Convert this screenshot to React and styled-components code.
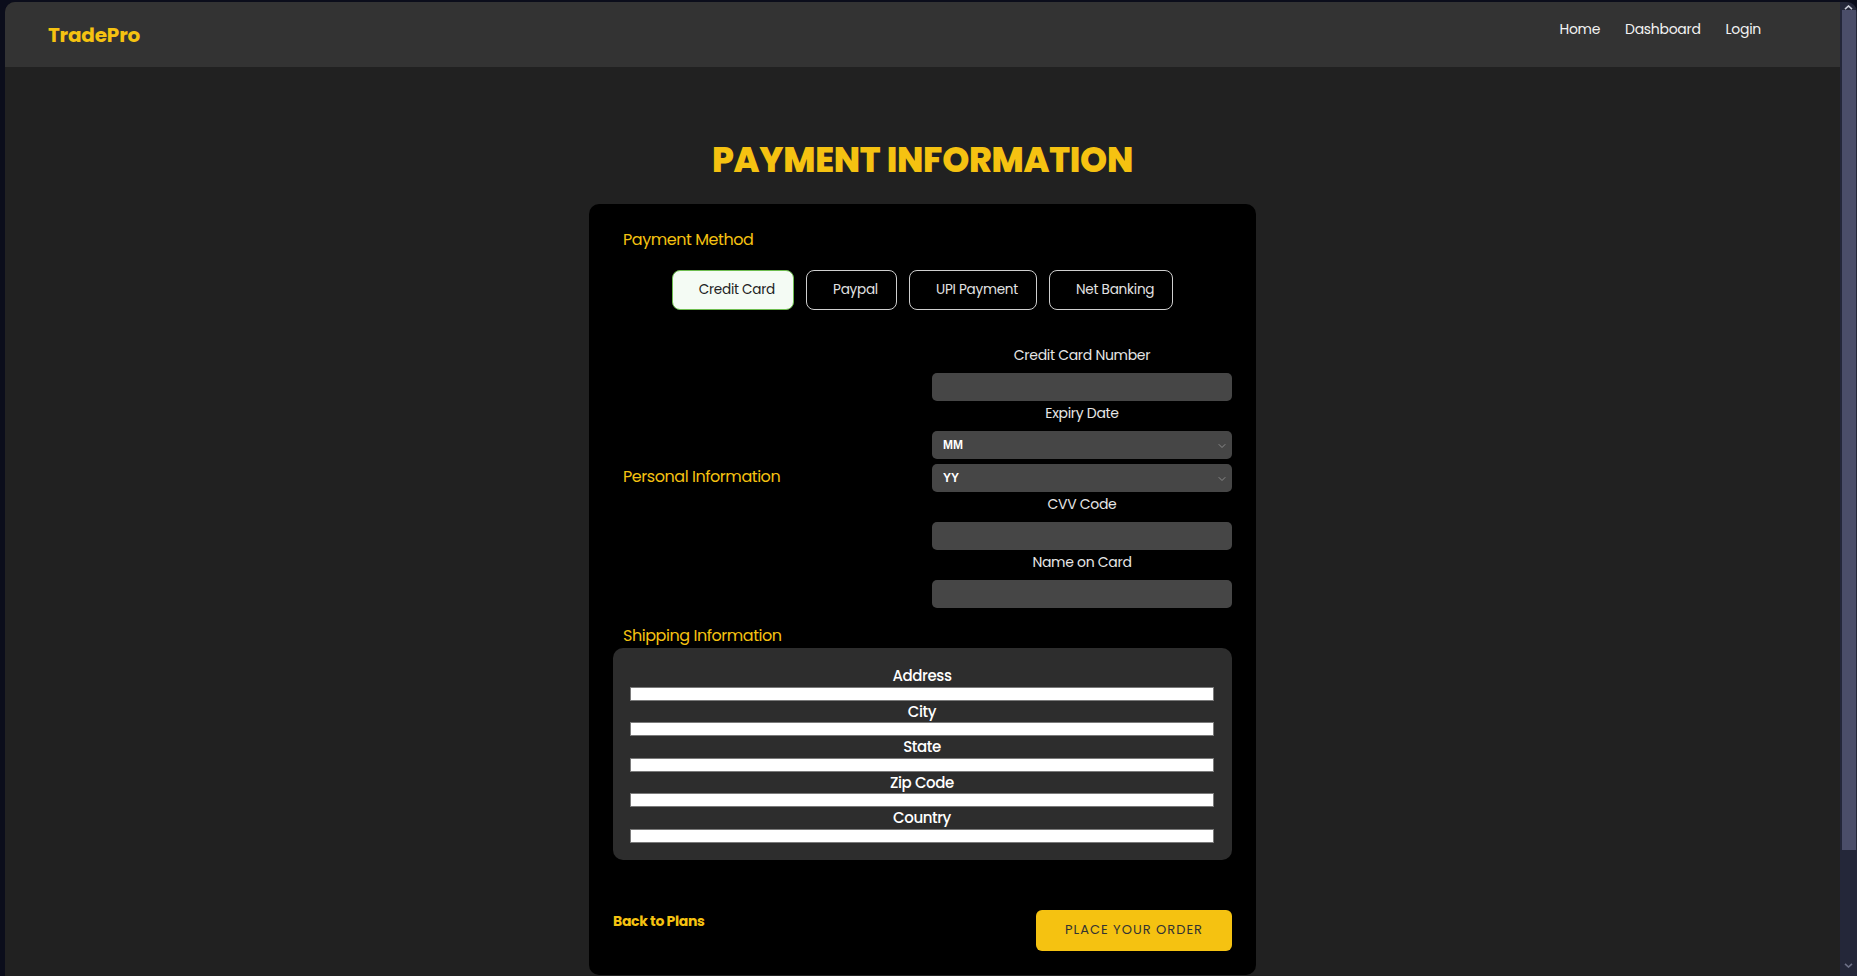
import React from "react";
import styled, { createGlobalStyle } from "styled-components";
import { ChevronDown } from "lucide-react";

const YELLOW = "#f5c211";

const Global = createGlobalStyle`
  html, body {
    margin: 0;
    padding: 0;
    height: 100%;
    overflow: hidden;
    background: #0b0d1b;
  }
  * { box-sizing: border-box; }
  #root { height: 100%; }
`;

const Frame = styled.div`
  display: flex;
  height: calc(100vh - 2px);
  margin: 2px 0 0 5px;
  border-radius: 10px 10px 0 0;
  overflow: hidden;
  font-family: Poppins, Inter, "Noto Sans", sans-serif;
`;

const Page = styled.div`
  flex: 1;
  background: #212121;
  overflow: hidden;
  display: flex;
  flex-direction: column;
`;

const Header = styled.header`
  flex: none;
  height: 65px;
  background: #333333;
  display: flex;
  justify-content: space-between;
  align-items: center;
  padding: 0 79px 0 43px;
`;

const Logo = styled.div`
  color: ${YELLOW};
  font-size: 20px;
  line-height: 24px;
  font-weight: 700;
  letter-spacing: -0.2px;
`;

const Nav = styled.nav`
  align-self: flex-start;
  margin-top: 17px;
  display: flex;
  gap: 25px;
`;

const NavLink = styled.a`
  color: #f2f2f2;
  font-size: 14px;
  line-height: 20px;
  font-weight: 400;
  letter-spacing: -0.3px;
  text-decoration: none;
`;

const Main = styled.main`
  display: flex;
  flex-direction: column;
  align-items: center;
`;

const Title = styled.h1`
  margin: 71px 0 22px;
  color: ${YELLOW};
  font-size: 34.5px;
  line-height: 44px;
  font-weight: 800;
  letter-spacing: -0.3px;
`;

const Card = styled.section`
  width: 667px;
  background: #000;
  border-radius: 10px;
  padding: 24px;
  margin-bottom: 150px;
`;

const SectionHeading = styled.h2`
  margin: ${(p) => p.$mt || 0}px 0 0 10px;
  color: ${YELLOW};
  font-size: 16px;
  line-height: 24px;
  font-weight: 400;
  letter-spacing: -0.45px;
`;

const MethodRow = styled.div`
  display: flex;
  justify-content: center;
  gap: 12px;
  margin-top: 18px;
`;

const MethodButton = styled.button`
  height: 40px;
  padding: 0 18px 0 26px;
  border-radius: 8px;
  font-family: inherit;
  font-size: 13.6px;
  letter-spacing: -0.25px;
  border: 1px solid ${(p) => (p.$active ? "#6dbd4f" : "#cfcfcf")};
  background: ${(p) => (p.$active ? "#f4fbf4" : "#000")};
  color: ${(p) => (p.$active ? "#222" : "#e2e2e2")};
`;

const PersonalRow = styled.div`
  display: flex;
  align-items: center;
  justify-content: space-between;
  margin-top: 35px;
`;

const PersonalHeading = styled(SectionHeading)`
  margin: 0 0 0 10px;
`;

const FieldColumn = styled.div`
  width: 300px;
  display: flex;
  flex-direction: column;
`;

const FieldLabel = styled.label`
  display: block;
  text-align: center;
  color: #e6e6e6;
  font-size: 14px;
  line-height: 21px;
  letter-spacing: -0.3px;
  margin: ${(p) => (p.$first ? 0 : 2)}px 0 7px;
`;

const DarkInput = styled.input`
  display: block;
  width: 100%;
  height: 28px;
  border: none;
  border-radius: 5px;
  background: #464646;
  color: #fff;
  padding: 0 10px;
  outline: none;
`;

const SelectStack = styled.div`
  display: flex;
  flex-direction: column;
  gap: 5px;
`;

const SelectWrap = styled.div`
  position: relative;
  height: 28px;
`;

const DarkSelect = styled.select`
  appearance: none;
  width: 100%;
  height: 28px;
  border: none;
  border-radius: 5px;
  background: #464646;
  color: #fff;
  padding: 0 11px;
  font-family: "Liberation Sans", Arial, sans-serif;
  font-size: 12px;
  font-weight: 700;
  outline: none;
`;

const SelectChevron = styled(ChevronDown)`
  position: absolute;
  right: 4px;
  top: 9px;
  color: #8a8a8a;
  pointer-events: none;
`;

const ShipBox = styled.div`
  background: #2d2d2d;
  border-radius: 10px;
  padding: 17px 18px 17px 17px;
`;

const ShipLabel = styled.label`
  display: block;
  text-align: center;
  color: #fff;
  font-size: 15px;
  font-weight: 500;
  line-height: 21.5px;
  letter-spacing: -0.4px;
`;

const ShipInput = styled.input`
  display: block;
  width: 100%;
  height: 14px;
  border: 1px solid #7a7a7a;
  background: #fff;
  padding: 0;
`;

const FooterRow = styled.div`
  display: flex;
  justify-content: space-between;
  align-items: flex-start;
  margin-top: 50px;
`;

const BackLink = styled.a`
  margin-top: 1px;
  color: ${YELLOW};
  font-size: 14px;
  line-height: 20px;
  font-weight: 700;
  letter-spacing: -0.35px;
  text-decoration: none;
`;

const OrderButton = styled.button`
  width: 196px;
  height: 41px;
  border: none;
  border-radius: 6px;
  background: ${YELLOW};
  color: #333;
  font-family: inherit;
  font-size: 13px;
  letter-spacing: 1px;
  font-weight: 400;
`;

const Rail = styled.div`
  flex: none;
  width: 17px;
  background: #242739;
  display: flex;
  flex-direction: column;
  align-items: center;
`;

const RailArrow = styled.svg`
  flex: none;
  margin-top: ${(p) => p.$mt || 0}px;
`;

const Thumb = styled.div`
  flex: none;
  width: 14px;
  margin-left: 1px;
  height: 840px;
  background: #4b4e69;
`;

const methods = ["Credit Card", "Paypal", "UPI Payment", "Net Banking"];
const shipping = ["Address", "City", "State", "Zip Code", "Country"];

export default function App() {
  return (
    <>
      <Global />
      <Frame>
        <Page>
          <Header>
            <Logo>TradePro</Logo>
            <Nav>
              <NavLink>Home</NavLink>
              <NavLink>Dashboard</NavLink>
              <NavLink>Login</NavLink>
            </Nav>
          </Header>
          <Main>
            <Title>PAYMENT INFORMATION</Title>
            <Card>
              <SectionHeading>Payment Method</SectionHeading>
              <MethodRow>
                {methods.map((m, i) => (
                  <MethodButton key={m} $active={i === 0}>
                    {m}
                  </MethodButton>
                ))}
              </MethodRow>
              <PersonalRow>
                <PersonalHeading>Personal Information</PersonalHeading>
                <FieldColumn>
                  <FieldLabel $first>Credit Card Number</FieldLabel>
                  <DarkInput />
                  <FieldLabel>Expiry Date</FieldLabel>
                  <SelectStack>
                    <SelectWrap>
                      <DarkSelect defaultValue="MM">
                        <option>MM</option>
                      </DarkSelect>
                      <SelectChevron size={12} strokeWidth={2} />
                    </SelectWrap>
                    <SelectWrap>
                      <DarkSelect defaultValue="YY">
                        <option>YY</option>
                      </DarkSelect>
                      <SelectChevron size={12} strokeWidth={2} />
                    </SelectWrap>
                  </SelectStack>
                  <FieldLabel>CVV Code</FieldLabel>
                  <DarkInput />
                  <FieldLabel>Name on Card</FieldLabel>
                  <DarkInput />
                </FieldColumn>
              </PersonalRow>
              <SectionHeading $mt={16}>Shipping Information</SectionHeading>
              <ShipBox>
                {shipping.map((s) => (
                  <React.Fragment key={s}>
                    <ShipLabel>{s}</ShipLabel>
                    <ShipInput />
                  </React.Fragment>
                ))}
              </ShipBox>
              <FooterRow>
                <BackLink>Back to Plans</BackLink>
                <OrderButton>PLACE YOUR ORDER</OrderButton>
              </FooterRow>
            </Card>
          </Main>
        </Page>
        <Rail>
          <RailArrow $mt={3} width="9" height="5" viewBox="0 0 9 5">
            <path d="M1 4.2 L4.5 1 L8 4.2" fill="none" stroke="#c9cbd6" strokeWidth="1.6" />
          </RailArrow>
          <Thumb />
          <RailArrow $mt={113} width="9" height="5" viewBox="0 0 9 5">
            <path d="M1 0.8 L4.5 4 L8 0.8" fill="none" stroke="#6d7086" strokeWidth="1.6" />
          </RailArrow>
        </Rail>
      </Frame>
    </>
  );
}
